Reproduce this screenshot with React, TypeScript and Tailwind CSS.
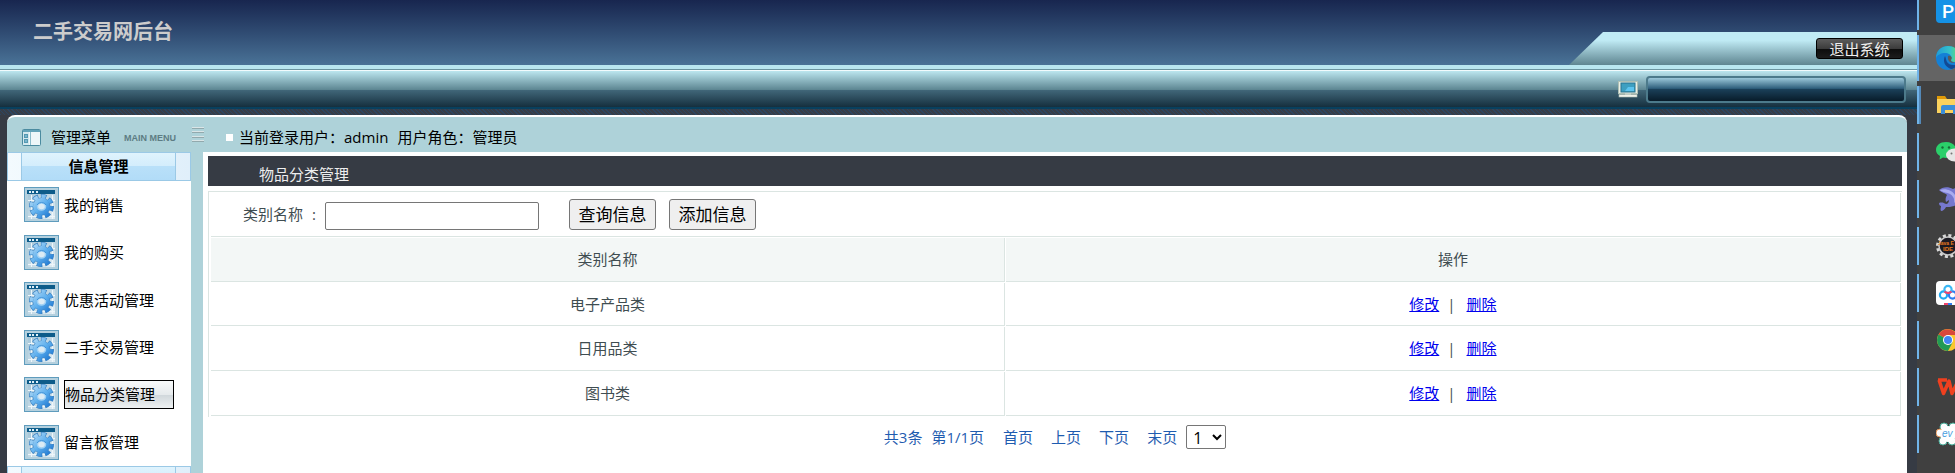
import type { ReactNode } from "react";

type MenuItem = {
  label: string;
  active?: boolean;
};

const menuItems: MenuItem[] = [
  { label: "我的销售" },
  { label: "我的购买" },
  { label: "优惠活动管理" },
  { label: "二手交易管理" },
  { label: "物品分类管理", active: true },
  { label: "留言板管理" },
];

const categories = ["电子产品类", "日用品类", "图书类"];

const GearIcon = () => (
  <svg width="35" height="35" viewBox="0 0 35 35" className="shrink-0">
    <defs>
      <linearGradient id="gearFill" gradientUnits="userSpaceOnUse" x1="-10" y1="-10" x2="10" y2="10">
        <stop offset="0" stopColor="#b4dbf6" />
        <stop offset="0.5" stopColor="#5fb0ee" />
        <stop offset="1" stopColor="#1a74d0" />
      </linearGradient>
      <linearGradient id="gearPane" x1="0" y1="0" x2="1" y2="1">
        <stop offset="0" stopColor="#a5c6d8" />
        <stop offset="1" stopColor="#e2edf3" />
      </linearGradient>
    </defs>
    <rect x="0.5" y="0.5" width="34" height="34" fill="#b4d0de" stroke="#5f9cbd" />
    <rect x="4" y="7" width="27" height="25" fill="url(#gearPane)" />
    <path d="M4 13.5h27M4 29.5h27M7.500 8v24M28.500 8v24" stroke="#eef6fa" />
    <rect x="3" y="3" width="28" height="4" fill="#0d5c8a" />
    <path d="M5 4h2v2H5zM8 4h2v2H8zM12 4h2v2h-2z" fill="#dff0f8" />
    <g transform="translate(17.5 19.5)" fill="none">
      <circle r="10" stroke="#3b82c2" strokeWidth="5" strokeDasharray="5.300 2.554" strokeDashoffset="0.900" />
      <circle r="9" fill="#3b82c2" />
      <circle r="10" stroke="url(#gearFill)" strokeWidth="3.800" strokeDasharray="4.100 3.754" strokeDashoffset="0.300" />
      <circle r="8.400" fill="url(#gearFill)" />
      <ellipse rx="4" ry="3.500" fill="#dcebf4" stroke="#9fd0f4" strokeWidth="1.500" />
      <path d="M-4.500-1.500A5 4.500 0 0 1 4.500-1.500" stroke="#2f86d2" strokeWidth="0.800" />
    </g>
  </svg>
);

const PanelIcon = () => (
  <svg width="19" height="17" viewBox="0 0 19 17">
    <rect x="0.500" y="0.500" width="18" height="16" rx="1" fill="#eef7f9" stroke="#4b8ba0" />
    <rect x="1" y="1" width="17" height="2" fill="#63a3b8" />
    <rect x="1" y="3" width="6" height="13" fill="#d3e8ee" />
    <rect x="2.500" y="5.500" width="3" height="3" fill="#7ab6cd" stroke="#5599b2" />
    <rect x="2.500" y="10.500" width="3" height="3" fill="#7ab6cd" stroke="#5599b2" />
    <path d="M8.500 3v13" stroke="#8bbccb" />
  </svg>
);

const MonitorIcon = () => (
  <svg width="20" height="17" viewBox="0 0 20 17">
    <rect x="0.500" y="0.500" width="19" height="12" fill="#ebefe4" stroke="#aebfb4" />
    <rect x="3" y="2" width="14" height="9" fill="#3e9fc0" stroke="#27738f" />
    <path d="M10 6h6v4h-9z" fill="#5cc3ee" />
    <path d="M7 12h6v2H7z" fill="#c7d2c8" />
    <rect x="1" y="13.500" width="18" height="2.500" fill="#f1f3ea" stroke="#aebfb4" strokeWidth="0.600" />
  </svg>
);

const BarsIcon = () => (
  <svg width="12" height="16" viewBox="0 0 12 16">
    <path d="M0 1.500h12M0 5.500h12M0 10.500h12M0 14.500h12" stroke="#d9e5e7" strokeWidth="1" />
    <path d="M0 2.500h12M0 6.500h12M0 11.500h12M0 15.500h12" stroke="#92a9ad" strokeWidth="1" />
  </svg>
);

const EdgeIcon = () => (
  <svg width="24" height="24" viewBox="0 0 24 24">
    <defs>
      <linearGradient id="edgeTop" x1="0" y1="0" x2="1" y2="0">
        <stop offset="0" stopColor="#1f9bd8" />
        <stop offset="0.600" stopColor="#36c3c8" />
        <stop offset="1" stopColor="#6adf5f" />
      </linearGradient>
    </defs>
    <circle cx="12" cy="12" r="12" fill="#1480d6" />
    <path d="M0 12C0 4 6 0 12 0c7 0 12 5 12 10 0 4-3 6-6 6-2 0-4-1-3-3 1-4-2-6-6-6-4 0-8 2-9 5z" fill="url(#edgeTop)" />
    <path d="M9 10c-3 6 1 12 7 13 3-1 5-3 6-5-5 2-9 1-11-2-1-2-1-4-2-6z" fill="#124a94" />
    <path d="M12 10c3-1 5 2 3 4 0 2 2 2 4 2-3 2-8 0-7-6z" fill="#5a5a5a" />
  </svg>
);

const FolderIcon = () => (
  <svg width="24" height="20" viewBox="0 0 24 20">
    <path d="M1 1h8l2 3H1z" fill="#e09a08" />
    <path d="M1 4h23v14H1z" fill="#fbd25e" />
    <path d="M5 19v-7q0-2 2-2h12q2 0 2 2v7h-4v-4H9v4z" fill="#3b8ed8" />
  </svg>
);

const WechatIcon = () => (
  <svg width="25" height="20" viewBox="0 0 25 20">
    <path d="M10 0c6 0 10 3.500 10 8s-4 8-10 8l-3-.4L3.500 17.500 4 14C1.500 12.500 0 10.500 0 8c0-4.500 4-8 10-8z" fill="#2bd06a" />
    <circle cx="6.500" cy="5.500" r="1.200" fill="#176b38" />
    <circle cx="13" cy="5.500" r="1.200" fill="#176b38" />
    <ellipse cx="18.500" cy="13" rx="8.500" ry="6.500" fill="#e6e6e6" />
    <circle cx="15.500" cy="11.500" r="1" fill="#777" />
    <circle cx="21" cy="11.500" r="1" fill="#777" />
  </svg>
);

const DolphinIcon = () => (
  <svg width="24" height="24" viewBox="0 0 24 24">
    <path
      d="M3 3C6 0 12-1 17 2c2-1 4-1 6 0l-1 5c3 5 1 10-4 12-3 1-6 1-8 1-1 2-3 4-5 4-1-2 0-3 0-5-1 0-2-1-2-3 3-1 5 0 7 1 2 0 3-2 3-4l-3 2c-1-3 0-5 1-7C9 6 6 6 3 3z"
      fill="#7678cf"
    />
    <path d="M4 3c5-2 12 0 15 5 2 3 1 6-1 8 1-4-1-7-4-9-3-2-7-1-10-4z" fill="#a9acf0" />
  </svg>
);

const IdeIcon = () => (
  <svg width="24" height="24" viewBox="0 0 24 24">
    <circle cx="12" cy="12" r="10.500" fill="none" stroke="#d8d8d8" strokeWidth="3" strokeDasharray="3 2.500" />
    <circle cx="12" cy="12" r="9" fill="#1c1a22" stroke="#c9c9c9" strokeWidth="1.500" />
    <text x="2" y="11" fontSize="5" fontWeight="bold" fill="#e8791f" fontFamily="Liberation Sans, sans-serif">
      Java E
    </text>
    <text x="7" y="17" fontSize="6" fontWeight="bold" fill="#e8791f" fontFamily="Liberation Sans, sans-serif">
      IDE
    </text>
  </svg>
);

const CloudIcon = () => (
  <svg width="24" height="24" viewBox="0 0 24 24">
    <rect width="24" height="24" rx="4" fill="#fff" />
    <g fill="none" strokeWidth="2.200">
      <circle cx="7.500" cy="14" r="3.600" stroke="#21aaf2" />
      <circle cx="16.500" cy="14" r="3.600" stroke="#2f7cf0" />
      <circle cx="12" cy="8.500" r="3.600" stroke="#3bb8f5" />
      <path d="M8.500 10.500q3.500 3 7 0" stroke="#f0436b" />
    </g>
    <path d="M8 22h4v2H8z" fill="#f0436b" />
    <path d="M12 22h4v2h-4z" fill="#2f7cf0" />
  </svg>
);

const ChromeIcon = () => (
  <svg width="24" height="22" viewBox="-1 0 24 22">
    <circle cx="11" cy="11" r="11" fill="#fbc82f" />
    <path d="M11 11 1.500 5.500A11 11 0 0 1 20.500 6H11z" fill="#d9473b" />
    <path d="M1.500 5.500A11 11 0 0 0 11 22l4.500-8.500L11 11z" fill="#219a55" />
    <circle cx="11" cy="11" r="5" fill="#fff" />
    <circle cx="11" cy="11" r="4" fill="#4285f4" />
  </svg>
);

const WpsIcon = () => (
  <svg width="25" height="18" viewBox="-1 0 25 18">
    <path d="M1 2h9M2 2l4.500 13.500L12 3l3 12.500L22 1" fill="none" stroke="#f0401f" strokeWidth="3.500" strokeLinejoin="round" />
  </svg>
);

const EvIcon = () => (
  <svg width="24" height="24" viewBox="0 0 24 24">
    <g fill="#fdfdfd" stroke="#49ad9a" strokeWidth="1">
      <circle cx="8" cy="5" r="4" />
      <circle cx="17" cy="5" r="4" />
      <circle cx="20" cy="13" r="4" />
      <circle cx="16" cy="19" r="4" />
      <circle cx="7" cy="19" r="4" />
      <circle cx="4" cy="11" r="4" stroke="#e5985a" />
    </g>
    <circle cx="12" cy="12" r="8" fill="#fff" />
    <text x="6" y="15" fontSize="10" fontStyle="italic" fill="#4b9fe0" fontFamily="Liberation Sans, sans-serif">
      ev
    </text>
  </svg>
);

const ParkIcon = () => (
  <span className="block h-[23px] w-6 rounded-b bg-[#1592e6] pl-[6px] font-['Roboto',sans-serif] text-[19px] leading-[23px] font-medium text-white">
    P
  </span>
);

type TaskProps = {
  children: ReactNode;
  current?: boolean;
  stacked?: boolean;
};

const Task = ({ children, current, stacked }: TaskProps) => (
  <div
    className={`flex shrink-0 items-center overflow-hidden ${
      current ? "h-[46px] bg-[#646464]" : "h-[38px]"
    }`}
  >
    <div className="h-full w-[2px] shrink-0 bg-[#70b4ea]" />
    <div className={`h-full w-[2px] shrink-0 ${stacked ? "bg-[#5489b8]" : ""}`} />
    <div className="ml-[15px] shrink-0">{children}</div>
  </div>
);

const Taskbar = () => (
  <aside className="flex w-[38px] shrink-0 flex-col gap-[9px] overflow-hidden bg-[#404040]">
    <div className="-mb-1 flex h-[30px] shrink-0 gap-[17px]">
      <div className="w-[2px] shrink-0 bg-[#70b4ea]" />
      <div className="shrink-0">
        <ParkIcon />
      </div>
    </div>
    <div className="-mb-1">
      <Task current>
        <EdgeIcon />
      </Task>
    </div>
    <Task stacked>
      <FolderIcon />
    </Task>
    <Task>
      <WechatIcon />
    </Task>
    <Task>
      <DolphinIcon />
    </Task>
    <Task>
      <IdeIcon />
    </Task>
    <Task>
      <CloudIcon />
    </Task>
    <Task>
      <ChromeIcon />
    </Task>
    <Task>
      <WpsIcon />
    </Task>
    <Task>
      <EvIcon />
    </Task>
  </aside>
);

const Header = () => (
  <header>
    <div className="flex h-[65px] justify-between bg-linear-to-b from-[#18264f] to-[#4a7397]">
      <h1 className="pt-[18px] pl-[33px] text-xl leading-7 font-bold text-[#cccccc]">二手交易网后台</h1>
      <div className="mt-8 flex h-[33px] w-[348px] justify-end bg-linear-to-b from-[#c0ebf5] from-25% to-[#5f8691] pt-[6px] pr-[14px] [clip-path:polygon(34px_0,100%_0,100%_100%,0_100%)]">
        <button className="h-[21px] w-[87px] rounded-[3px] border border-black bg-[linear-gradient(#5c5c5c,#3c3c3c_50%,#0c0c0c_50%,#1c1c1c)] text-[15px] leading-[18px] text-[#eeeeee]">
          退出系统
        </button>
      </div>
    </div>
    <div className="h-1 bg-[#b9e7f0]" />
    <div className="h-px bg-[#6b95a0]" />
    <div className="h-px bg-[#f2fbfd]" />
    <div className="flex h-[38px] items-center justify-end gap-2 border-b-2 border-[#08405e] bg-[linear-gradient(#bce6ef,#5d8692_52%,#42687a_52%,#152f3e)] pr-[11px]">
      <MonitorIcon />
      <div className="h-[27px] w-[260px] rounded-sm border-2 border-[#4c7a8b] bg-[linear-gradient(#9cc8da,#2f5f7c_45%,#1a3f58_50%,#081c2a)]" />
    </div>
    <div className="h-[6px] bg-[repeating-linear-gradient(45deg,#2c4560_0px,#2c4560_1px,#363d47_1px,#363d47_3px)]" />
  </header>
);

const MenuHeading = ({ children }: { children?: ReactNode }) => (
  <div className="flex h-[29px] border border-[#9bc9e6] bg-linear-to-r from-[#f3fafe] to-[#e0effa]">
    <div className="mr-[14px] ml-[13px] flex-1 border-x border-[#9bc9e6] bg-[linear-gradient(#dff3fd,#d3edfc_50%,#b9e0f9_50%,#b2dcf8)] text-center text-[15px] leading-[27px] font-bold">
      {children}
    </div>
  </div>
);

const Sidebar = () => (
  <nav className="w-[184px] shrink-0 bg-white">
    <MenuHeading>信息管理</MenuHeading>
    <ul className="flex h-[285px] flex-col justify-between pt-[6px] pb-[6px] pl-[17px]">
      {menuItems.map((item) => (
        <li key={item.label} className="flex h-[35px] items-center gap-[5px]">
          <GearIcon />
          <a
            href="#"
            className={`w-[110px] text-[15px] ${
              item.active
                ? "border border-black bg-[linear-gradient(#f8fafa,#e6eaec_50%,#cfd6da_50%,#eef1f2)] leading-[27px]"
                : "leading-7"
            }`}
          >
            {item.label}
          </a>
        </li>
      ))}
    </ul>
    <MenuHeading />
  </nav>
);

const cell = "border-r border-b border-[#dbe5e2] p-0 text-center font-normal";
const formButton =
  "rounded-[3px] border border-[#767676] bg-[#efefef] text-[17px] leading-[29px] w-[87px] text-black";

const CategoryTable = () => (
  <table className="w-full table-fixed border-separate border-spacing-px border-t border-l border-[#dbe5e2] pl-px text-[15px] text-[#3f4d51]">
    <colgroup>
      <col className="w-[47%]" />
      <col />
    </colgroup>
    <thead>
      <tr>
        <td colSpan={2} className="h-11 border-r border-b border-[#dbe5e2] p-0">
          <form className="flex items-center pl-8" onSubmit={(e) => e.preventDefault()}>
            <label htmlFor="category" className="flex w-[82px] gap-[9px]">
              <span>类别名称</span>
              <span>:</span>
            </label>
            <input
              id="category"
              type="text"
              className="mt-[3px] h-7 w-[214px] rounded-[2px] border border-[#767676] bg-white px-1 text-black"
            />
            <button type="submit" className={`ml-[30px] ${formButton}`}>
              查询信息
            </button>
            <button type="button" className={`ml-[13px] ${formButton}`}>
              添加信息
            </button>
          </form>
        </td>
      </tr>
      <tr className="h-11 bg-[#f3f7f6]">
        <th className={cell}>类别名称</th>
        <th className={cell}>操作</th>
      </tr>
    </thead>
    <tbody>
      {categories.map((name) => (
        <tr key={name} className="h-11 first:h-[43px]">
          <td className={cell}>{name}</td>
          <td className={cell}>
            <a href="#" className="text-[#0000ee] underline">
              修改
            </a>
            <span className="mr-[11px] ml-2">|</span>
            <a href="#" className="text-[#0000ee] underline">
              删除
            </a>
          </td>
        </tr>
      ))}
    </tbody>
  </table>
);

const Pagination = () => (
  <div className="mt-2 flex items-center justify-center text-[15px] text-[#1f5cb0]">
    <span className="mr-[9px]">共3条</span>
    <span>第1/1页</span>
    <a href="#" className="ml-[19px]">首页</a>
    <a href="#" className="ml-[18px]">上页</a>
    <a href="#" className="ml-[18px]">下页</a>
    <a href="#" className="ml-[18px]">末页</a>
    <select
      aria-label="页码"
      className="ml-[9px] h-6 w-10 rounded-[2px] border border-[#767676] bg-white pl-[2px] text-base leading-5 text-black"
    >
      <option>1</option>
    </select>
  </div>
);

const App = () => {
  return (
    <div className="flex h-screen overflow-hidden bg-[#363b44] font-['Open_Sans','Noto_Sans_CJK_SC',sans-serif] text-black">
      <div className="flex min-w-0 flex-1 flex-col">
        <Header />
        <div className="mr-[10px] ml-[7px] flex min-h-0 flex-1 flex-col overflow-hidden rounded-t-lg border-t-2 border-white bg-[#aed2d9]">
          <div className="flex h-[35px] shrink-0 items-center pt-[5px] text-[15px]">
            <div className="flex w-[197px] items-center pl-[15px]">
              <PanelIcon />
              <span className="ml-[10px]">管理菜单</span>
              <span className="mt-1 ml-[13px] font-['Liberation_Sans',sans-serif] text-[9px] font-bold text-[#5d7c83]">
                MAIN MENU
              </span>
              <div className="mb-[6px] ml-auto">
                <BarsIcon />
              </div>
            </div>
            <div className="ml-[22px] h-[7px] w-[7px] bg-white" />
            <p className="ml-[6px] flex gap-[9px]">
              <span>当前登录用户：admin</span>
              <span>用户角色：管理员</span>
            </p>
          </div>
          <div className="flex min-h-0 flex-1">
            <Sidebar />
            <main className="ml-3 min-w-0 flex-1 bg-white px-[5px] pt-1">
              <h2 className="mb-[5px] h-[30px] bg-[#363b44] pl-[51px] text-[15px] leading-9 text-[#eeeeee]">
                物品分类管理
              </h2>
              <CategoryTable />
              <Pagination />
            </main>
          </div>
        </div>
      </div>
      <Taskbar />
    </div>
  );
};

export default App;
